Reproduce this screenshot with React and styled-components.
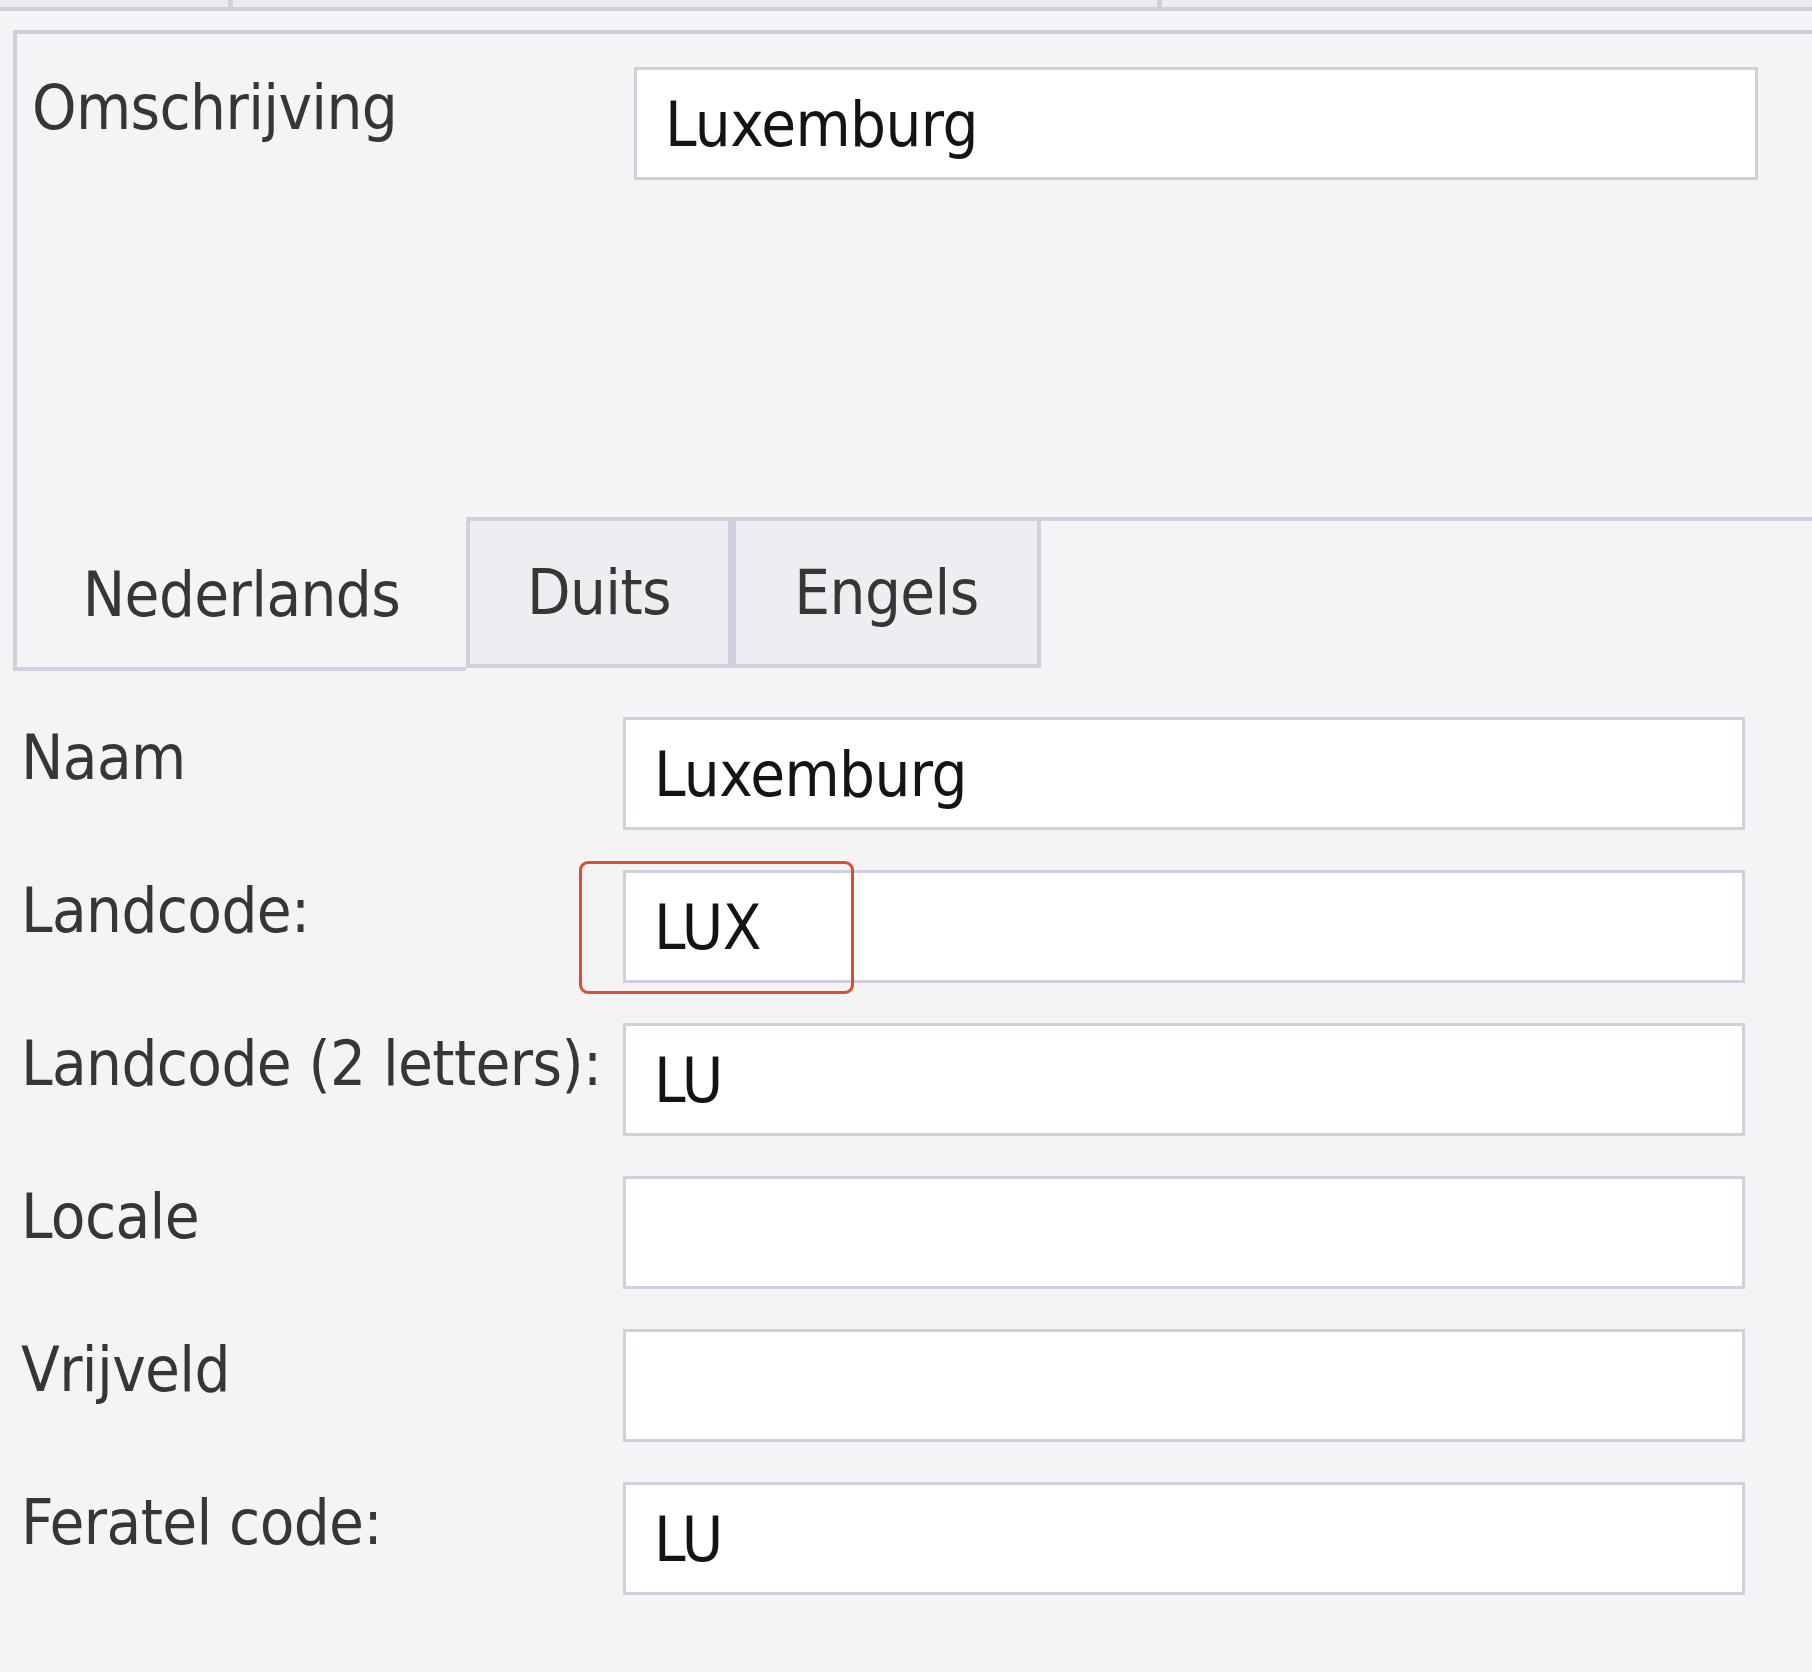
import React from "react"
import styled, { createGlobalStyle } from "styled-components"

const GlobalStyle = createGlobalStyle`
	html, body {
		margin: 0;
		padding: 0;
		background: #f4f4f4;
	}
	body {
		font-family: "DejaVu Sans Condensed", "DejaVu Sans", Tahoma, sans-serif;
		font-stretch: condensed;
		font-size: 63px;
		letter-spacing: -0.6px;
		line-height: 1;
		color: #363636;
	}
`

const LINE = "#cfcfdd"

const FormElement = styled.div`
	width: 1812px;
	height: 1672px;
	overflow: hidden;
	background: #f4f4f4;
	display: flex;
	flex-direction: column;
`

const HeaderStripElement = styled.div`
	height: 7px;
	background: #ecebf0;
	border-bottom: 4px solid ${LINE};
	display: flex;
`

const HeaderCellElement = styled.div`
	width: ${props => props.width ? `${props.width}px` : "auto"};
	flex: ${props => props.width ? "none" : 1};
	border-right: ${props => props.last ? "none" : `5px solid ${LINE}`};
`

const TabControlElement = styled.div`
	margin-top: 19px;
	margin-left: 13px;
	display: flex;
	flex-direction: column;
`

const TabPageElement = styled.div`
	box-sizing: border-box;
	height: 487px;
	border-top: 4px solid ${LINE};
	border-left: 4px solid ${LINE};
	padding: 33px 54px 0 15px;
	display: flex;
	align-items: flex-start;
`

const TabStripElement = styled.div`
	display: flex;
	align-items: flex-start;
`

const TabElement = styled.div`
	box-sizing: border-box;
	display: flex;
	align-items: center;
	justify-content: center;
	width: ${props => props.width}px;
	height: ${props => props.active ? 154 : 151}px;
	background: ${props => props.active ? "#f4f4f4" : "#ededf2"};
	border: 4px solid ${LINE};
	border-top: ${props => props.active ? "none" : `4px solid ${LINE}`};
	border-right: ${props => props.active ? "none" : `4px solid ${LINE}`};
	padding-top: ${props => props.active ? 4 : 0}px;
	color: #363636;
`

const TabFillerElement = styled.div`
	flex: 1;
	border-top: 4px solid ${LINE};
`

const FieldListElement = styled.div`
	padding: 46px 67px 0 21px;
	display: flex;
	flex-direction: column;
	gap: 40px;
`

const FieldRowElement = styled.div`
	display: flex;
	align-items: flex-start;
`

const LabelElement = styled.div`
	width: ${props => props.width}px;
	flex: none;
	padding-top: 9px;
	white-space: nowrap;
	color: #363636;
`

const InputCellElement = styled.div`
	position: relative;
	flex: 1;
`

const InputElement = styled.div`
	box-sizing: border-box;
	height: 113px;
	background: #ffffff;
	border: 3px solid ${LINE};
	padding: 23px 0 0 28px;
	color: #141414;
	white-space: nowrap;
`

const HighlightElement = styled.div`
	position: absolute;
	left: -44px;
	top: -9px;
	width: 275px;
	height: 133px;
	box-sizing: border-box;
	border: 3px solid #e04b37;
	border-radius: 9px;
	pointer-events: none;
`

const fields = [
	{ label: "Naam", value: "Luxemburg" },
	{ label: "Landcode:", value: "LUX", highlight: true },
	{ label: "Landcode (2 letters):", value: "LU" },
	{ label: "Locale", value: "" },
	{ label: "Vrijveld", value: "" },
	{ label: "Feratel code:", value: "LU" },
]

function Field({ label, value, highlight }) {
	return (
		<FieldRowElement>
			<LabelElement width={602}>{label}</LabelElement>
			<InputCellElement>
				<InputElement>{value}</InputElement>
				{highlight && <HighlightElement />}
			</InputCellElement>
		</FieldRowElement>
	)
}

function App() {
	return (
		<FormElement>
			<GlobalStyle />
			<HeaderStripElement>
				<HeaderCellElement width={228} />
				<HeaderCellElement width={924} />
				<HeaderCellElement last />
			</HeaderStripElement>

			<TabControlElement>
				<TabPageElement>
					<LabelElement width={602}>Omschrijving</LabelElement>
					<InputCellElement>
						<InputElement>Luxemburg</InputElement>
					</InputCellElement>
				</TabPageElement>
				<TabStripElement>
					<TabElement active width={453}>Nederlands</TabElement>
					<TabElement width={266}>Duits</TabElement>
					<TabElement width={309}>Engels</TabElement>
					<TabFillerElement />
				</TabStripElement>
			</TabControlElement>

			<FieldListElement>
				{fields.map(field => <Field key={field.label} {...field} />)}
			</FieldListElement>
		</FormElement>
	)
}

export default App
